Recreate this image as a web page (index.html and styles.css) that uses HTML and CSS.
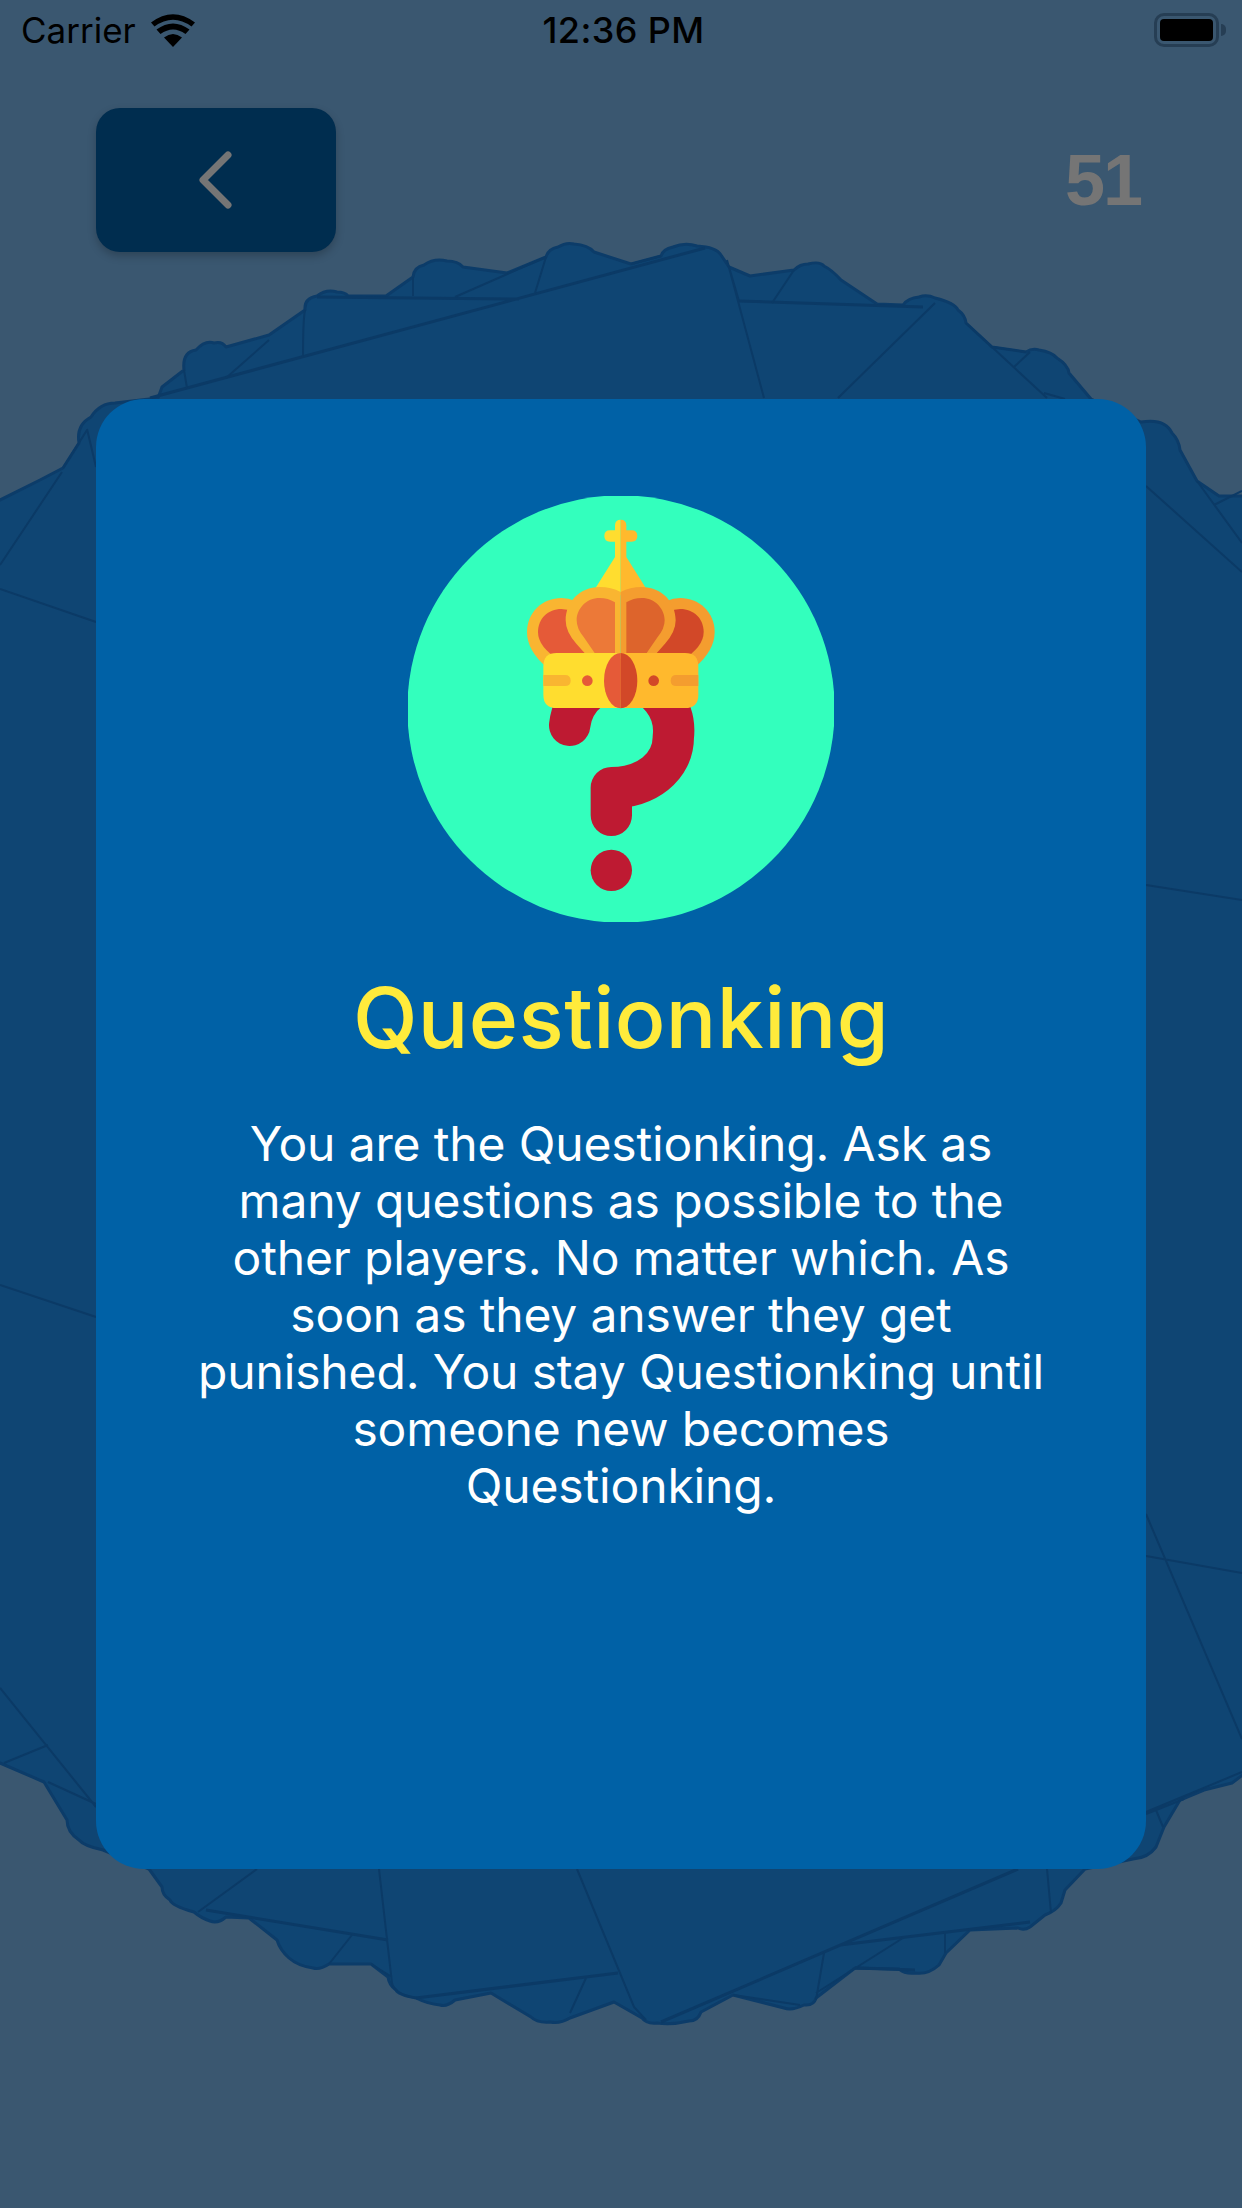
FILE: index.html
```html
<!DOCTYPE html>
<html lang="en">
<head>
    <meta charset="UTF-8">
    <meta name="viewport" content="width=device-width, initial-scale=1.0">
    <title>Questionking</title>
    <link rel="stylesheet" href="styles.css">
</head>
<body>

<div class="screen">
    <!-- pile of cards behind the open one -->
    <svg class="deck" viewBox="0 0 1242 2208" aria-hidden="true">
        <path class="deck-shape" d="M-10 505 L40 480 L63 468 L79 443 Q76 425 91 417 Q100 403 115 403 L158 398 L162 387 L184 370 Q182 352 196 350 Q205 340 214 343 Q222 341 226 347 L269 335 L305 310 Q304 298 317 296 Q326 289 337 292 Q345 292 348 296 L386 296 L413 277 Q414 267 424 265 Q434 258 447 261 Q458 261 463 267 L507 273 L546 257 Q548 249 558 247 Q566 242 574 244 Q588 245 594 252 L631 264 L661 256 Q663 249 673 247 Q685 242 697 246 Q716 247 721 255 L729 267 L750 276 L794 270 Q800 264 808 264 Q820 261 824 266 Q832 270 841 280 L877 304 L903 305 Q908 298 919 297 Q927 294 935 298 Q955 303 958 310 Q965 315 966 323 L992 347 L1026 352 Q1032 348 1039 350 Q1052 352 1057 358 Q1068 365 1069 373 L1091 399 L1141 422 Q1165 418 1172 433 Q1179 440 1180 450 L1197 481 L1219 496 L1252 496 L1252 1768 L1232 1783 L1204 1790 L1180 1800 L1164 1827 L1156 1847 Q1148 1858 1133 1859 L1085 1869 L1065 1890 L1061 1903 Q1056 1911 1045 1915 L1030 1927 Q1024 1931 1018 1928 L970 1930 L946 1953 L939 1965 Q928 1975 915 1973 Q905 1974 899 1969 L855 1968 L816 1998 Q814 2006 804 2005 Q792 2011 784 2008 L733 1995 L701 2012 Q698 2021 689 2021 Q672 2025 657 2023 Q646 2024 642 2018 L614 2002 L570 2018 Q560 2024 550 2022 Q537 2023 531 2017 L491 1993 L455 2000 Q447 2007 440 2005 Q428 2004 416 1998 Q398 1995 396 1990 Q389 1985 388 1977 L371 1964 L329 1964 Q320 1970 313 1968 Q298 1966 289 1958 Q280 1950 277 1940 L249 1918 L226 1917 Q218 1924 210 1921 Q201 1918 194 1912 Q172 1906 170 1900 Q162 1895 162 1887 L149 1869 L103 1850 Q84 1846 79 1840 Q67 1832 67 1820 L44 1782 L0 1763 L-10 1763 Z"/>
        <path class="deck-line thick" d="M705 248 L150 398 M317 297 L519 299 M739 301 L923 307 M206 1910 L388 1940 M416 1998 L618 1973 M1018 1869 L661 2022 M840 1945 L1030 1922 M855 1968 L915 1970"/>
        <path class="deck-line" d="M727 260 L764 398 M305 310 Q303 320 303 357 M546 257 L455 297 M546 257 L535 293 M413 277 L413 296 M269 340 L226 378 M184 370 L187 388 M794 270 L772 303 M935 303 L838 398 M966 323 L1047 398 M1030 352 L1014 367 M1044 393 L1065 399 M661 256 L631 264 M729 267 L739 301 M992 347 L1026 352"/>
        <path class="deck-line" d="M0 565 L62 472 M0 589 L96 622 M0 1285 L96 1317 M0 1688 L96 1807 M4 1763 L48 1745 M48 1782 L96 1804 M87 429 L96 467 M63 468 L87 430"/>
        <path class="deck-line" d="M1146 486 L1242 572 M1197 481 L1242 543 M1214 505 L1242 491 M1146 885 L1242 900 M1146 1514 L1242 1739 M1146 1556 L1242 1573 M1146 1814 L1184 1799 M1146 1812 L1242 1772 M1156 1810 L1163 1827"/>
        <path class="deck-line" d="M257 1869 L198 1912 M379 1869 L392 1983 Q394 1994 416 1998 M577 1869 L634 2007 L646 2020 M1047 1869 L1051 1913 M824 1953 L816 2000 M903 1938 L816 1993 M945 1933 L945 1953 M352 1935 L329 1964 M371 1964 L392 1977 M586 1978 L570 2013 M733 1995 L800 2005"/>
    </svg>

    <div class="status-bar">
        <div class="status-left">
            <span>Carrier</span>
            <svg class="wifi" viewBox="0 0 44 33">
                <path d="M22 33 L13 23.5 Q22 16.5 31 23.5 Z"/>
                <path d="M9.5 20 L5.5 15.5 Q22 3.5 38.5 15.5 L34.500 20 Q22 11 9.500 20 Z"/>
                <path d="M3.500 12.500 L0 8.500 Q22 -8 44 8.500 L40.500 12.500 Q22 -1 3.500 12.500 Z"/>
            </svg>
        </div>
        <div class="status-time">12:36 PM</div>
        <div class="status-right">
            <div class="battery"><div class="battery-level"></div></div>
            <div class="battery-tip"></div>
        </div>
    </div>

    <div class="top-row">
        <button class="back-btn" type="button">
            <svg class="chevron" viewBox="0 0 34 60">
                <path d="M29 5 L4 30 L29 55"/>
            </svg>
        </button>
        <div class="counter">51</div>
    </div>

    <div class="card">
        <svg class="role-icon" viewBox="85 47 1278 1278">
            <circle cx="724" cy="686" r="641" fill="#33ffbd"/>
            <!-- question mark -->
            <path class="mark" d="M570 735 A155 155 0 0 1 881 770 C881 860 800 922 695 922 L695 1005"/>
            <circle cx="695" cy="1170" r="62" fill="#be1a32"/>
            <!-- cross and spire -->
            <path fill="#ffdd2f" d="M723 118 Q706 118 706 135 L706 150 L691 150 Q674 150 674 167 Q674 184 691 184 L706 184 L706 230 L648 322 L723 345 Z"/>
            <path fill="#ffb92d" d="M723 118 Q740 118 740 135 L740 150 L756 150 Q773 150 773 167 Q773 184 756 184 L740 184 L740 230 L798 322 L723 345 Z"/>
            <!-- side lobes -->
            <path fill="#f9b531" d="M500 560 Q442 510 442 455 C442 395 490 353 545 353 Q590 353 620 390 L620 560 Z"/>
            <path fill="#e55a38" d="M540 540 Q475 500 475 455 C475 415 505 386 545 386 Q580 386 620 420 L620 540 Z"/>
            <path fill="#f49d2f" d="M947 560 Q1005 510 1005 455 C1005 395 957 353 902 353 Q857 353 827 390 L827 560 Z"/>
            <path fill="#d24828" d="M907 540 Q972 500 972 455 C972 415 942 386 902 386 Q867 386 827 420 L827 540 Z"/>
            <!-- middle lobes -->
            <path fill="#f9b531" d="M723 335 Q695 320 660 320 C600 320 558 365 558 420 Q558 455 590 490 L630 535 L723 535 Z"/>
            <path fill="#ec7938" d="M706 366 Q685 353 660 353 C620 353 591 385 591 420 Q591 445 612 470 L645 518 L706 518 Z"/>
            <path fill="#f49d2f" d="M723 335 Q751 320 786 320 C846 320 888 365 888 420 Q888 455 856 490 L816 535 L723 535 Z"/>
            <path fill="#dd642c" d="M740 366 Q761 353 786 353 C826 353 855 385 855 420 Q855 445 834 470 L801 518 L740 518 Z"/>
            <!-- band -->
            <path fill="#ffdd2f" d="M723 518 L531 518 Q491 518 491 558 L491 643 Q491 683 531 683 L723 683 Z"/>
            <path fill="#ffb92d" d="M723 518 L916 518 Q956 518 956 558 L956 643 Q956 683 916 683 L723 683 Z"/>
            <path fill="#f9b531" d="M491 584 L556 584 Q573 584 573 601 Q573 617 556 617 L491 617 Z"/>
            <path fill="#f49d2f" d="M956 584 L890 584 Q873 584 873 601 Q873 617 890 617 L956 617 Z"/>
            <circle cx="623" cy="601" r="16" fill="#e55a38"/>
            <circle cx="822" cy="601" r="16" fill="#d24828"/>
            <path fill="#e55a38" d="M723 518 A50 83 0 0 0 723 684 Z"/>
            <path fill="#d24828" d="M723 518 A50 83 0 0 1 723 684 Z"/>
        </svg>
        <h2 class="role-title">Questionking</h2>
        <p class="role-text">You are the Questionking. Ask as many questions as possible to the other players. No matter which. As soon as they answer they get punished. You stay Questionking until someone new becomes Questionking.</p>
    </div>
</div>

</body>
</html>
```

FILE: styles.css
```css
* {
    box-sizing: border-box;
}
body {
    margin: 0;
    font-family: Inter, "Liberation Sans", sans-serif;
    background-color: #3a5770;
}
.screen {
    position: relative;
    width: 1242px;
    height: 2208px;
    overflow: hidden;
    background-color: #3a5770;
}
.deck {
    position: absolute;
    left: 0;
    top: 0;
    width: 1242px;
    height: 2208px;
}
.deck-shape {
    fill: #0f4573;
    stroke: #0c3c69;
    stroke-width: 3;
    stroke-linejoin: round;
}
.deck-line {
    fill: none;
    stroke: #0b3a66;
    stroke-width: 2;
}
.deck-line.thick {
    stroke-width: 3;
}
.status-bar {
    position: relative;
    display: flex;
    align-items: center;
    justify-content: space-between;
    height: 60px;
    padding: 0 28px 0 21px;
    color: #000;
    font-size: 35px;
}
.status-left {
    flex: 1;
    display: flex;
    align-items: center;
    gap: 15px;
}
.wifi {
    width: 44px;
    height: 33px;
}
.status-time {
    font-weight: 500;
    font-size: 36px;
    letter-spacing: 0.4px;
}
.status-right {
    flex: 1;
    display: flex;
    align-items: center;
    justify-content: flex-end;
    gap: 2px;
    margin-right: -12px;
}
.battery {
    width: 65px;
    height: 34px;
    padding: 3px;
    border: 3px solid #263e54;
    border-radius: 10px;
}
.battery-level {
    height: 100%;
    background-color: #000;
    border-radius: 4px;
}
.battery-tip {
    width: 5px;
    height: 12px;
    background-color: #263e54;
    border-radius: 0 6px 6px 0;
}
.top-row {
    position: relative;
    display: flex;
    align-items: center;
    justify-content: space-between;
    margin-top: 48px;
    padding: 0 101px 0 96px;
}
.back-btn {
    display: flex;
    align-items: center;
    justify-content: center;
    width: 240px;
    height: 144px;
    padding: 0;
    border: none;
    border-radius: 24px;
    background-color: #002d4f;
    box-shadow: 0 4px 9px rgba(0, 0, 0, 0.22);
}
.chevron {
    width: 34px;
    height: 60px;
    fill: none;
    stroke: #757575;
    stroke-width: 7;
    stroke-linecap: round;
    stroke-linejoin: round;
}
.counter {
    color: #757575;
    font-family: "Liberation Sans", sans-serif;
    font-size: 72px;
    font-weight: 700;
    line-height: 1;
    letter-spacing: -2px;
}
.card {
    position: relative;
    display: flex;
    flex-direction: column;
    align-items: center;
    width: 1050px;
    height: 1470px;
    margin: 147px auto 0;
    padding-top: 97px;
    background-color: #0061a6;
    border-radius: 48px;
}
.role-icon {
    display: block;
    width: 426px;
    height: 426px;
}
.mark {
    fill: none;
    stroke: #be1a32;
    stroke-width: 124;
    stroke-linecap: round;
    stroke-linejoin: round;
}
.role-title {
    margin: 48px 0 0;
    color: #ffeb3b;
    font-size: 84px;
    font-weight: 500;
    line-height: 96px;
    letter-spacing: 0.4px;
}
.role-text {
    width: 860px;
    margin: 49px 0 0;
    color: #fff;
    font-size: 48px;
    line-height: 57px;
    text-align: center;
    letter-spacing: -0.15px;
}
```
